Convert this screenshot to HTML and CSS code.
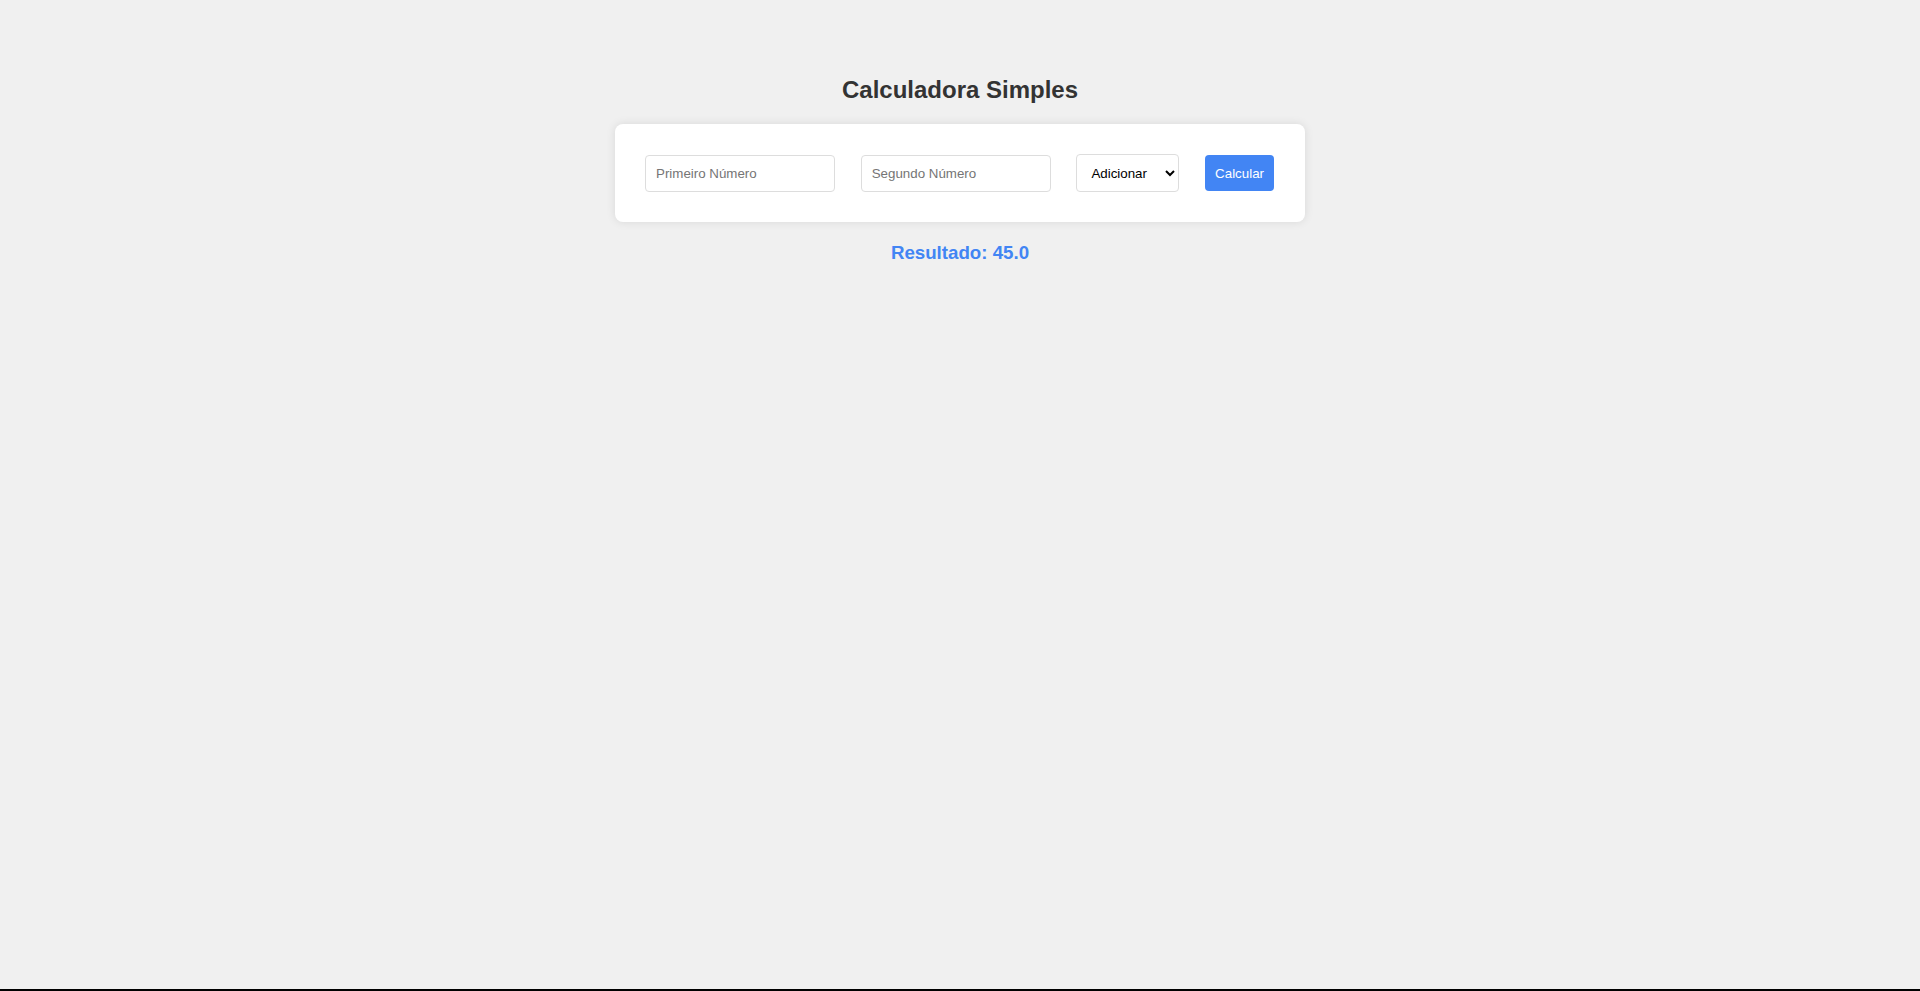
FILE: index.html
```html
<!DOCTYPE html>
<html lang="pt">
<head>
<meta charset="utf-8">
<title>Calculadora Simples</title>
<link rel="stylesheet" href="styles.css">
</head>
<body>
<main class="page">
  <h2 class="title">Calculadora Simples</h2>
  <form class="card">
    <input class="field" type="number" placeholder="Primeiro Número">
    <input class="field" type="number" placeholder="Segundo Número">
    <select class="op">
      <option>Adicionar</option>
      <option>Subtrair</option>
      <option>Multiplicar</option>
      <option>Dividir</option>
    </select>
    <button class="btn" type="button">Calcular</button>
  </form>
  <h3 class="result">Resultado: 45.0</h3>
</main>
</body>
</html>
```

FILE: styles.css
```css
html, body {
  margin: 0;
  padding: 0;
}
body {
  background: #f0f0f0;
  font-family: "Liberation Sans", Arial, sans-serif;
  min-height: 100vh;
  box-sizing: border-box;
  border-bottom: 2px solid #000;
}
.page {
  display: flex;
  flex-direction: column;
  align-items: center;
  padding-top: 76px;
}
.title {
  margin: 0 0 20px;
  font-size: 24px;
  font-weight: bold;
  color: #333;
  line-height: normal;
}
.card {
  box-sizing: border-box;
  width: 690px;
  padding: 30px 31px 30px 30px;
  background: #fff;
  border-radius: 8px;
  box-shadow: 0 0 10px rgba(0, 0, 0, 0.1);
  display: flex;
  align-items: center;
  justify-content: space-between;
}
.field {
  box-sizing: border-box;
  width: 190px;
  height: 37px;
  padding: 0 10px;
  border: 1px solid #ddd;
  border-radius: 4px;
  font-family: "Liberation Sans", Arial, sans-serif;
  font-size: 13.333px;
  color: #000;
  background: #fff;
  outline: none;
  -moz-appearance: textfield;
}
.field::-webkit-outer-spin-button,
.field::-webkit-inner-spin-button {
  -webkit-appearance: none;
  margin: 0;
}
.field::placeholder {
  color: #757575;
}
.op {
  box-sizing: border-box;
  width: 103px;
  height: 38px;
  padding: 0 6px 0 10px;
  border: 1px solid #ddd;
  border-radius: 4px;
  background-color: #fff;
  font-family: "Liberation Sans", Arial, sans-serif;
  font-size: 13.333px;
  color: #000;
}
.btn {
  box-sizing: border-box;
  height: 36px;
  padding: 0 10px;
  border: none;
  border-radius: 4px;
  background: #4285f4;
  color: #fff;
  font-family: "Liberation Sans", Arial, sans-serif;
  font-size: 13.333px;
  cursor: pointer;
}
.result {
  margin: 20px 0 0;
  font-size: 18.72px;
  font-weight: bold;
  color: #4285f4;
  line-height: normal;
}
```
